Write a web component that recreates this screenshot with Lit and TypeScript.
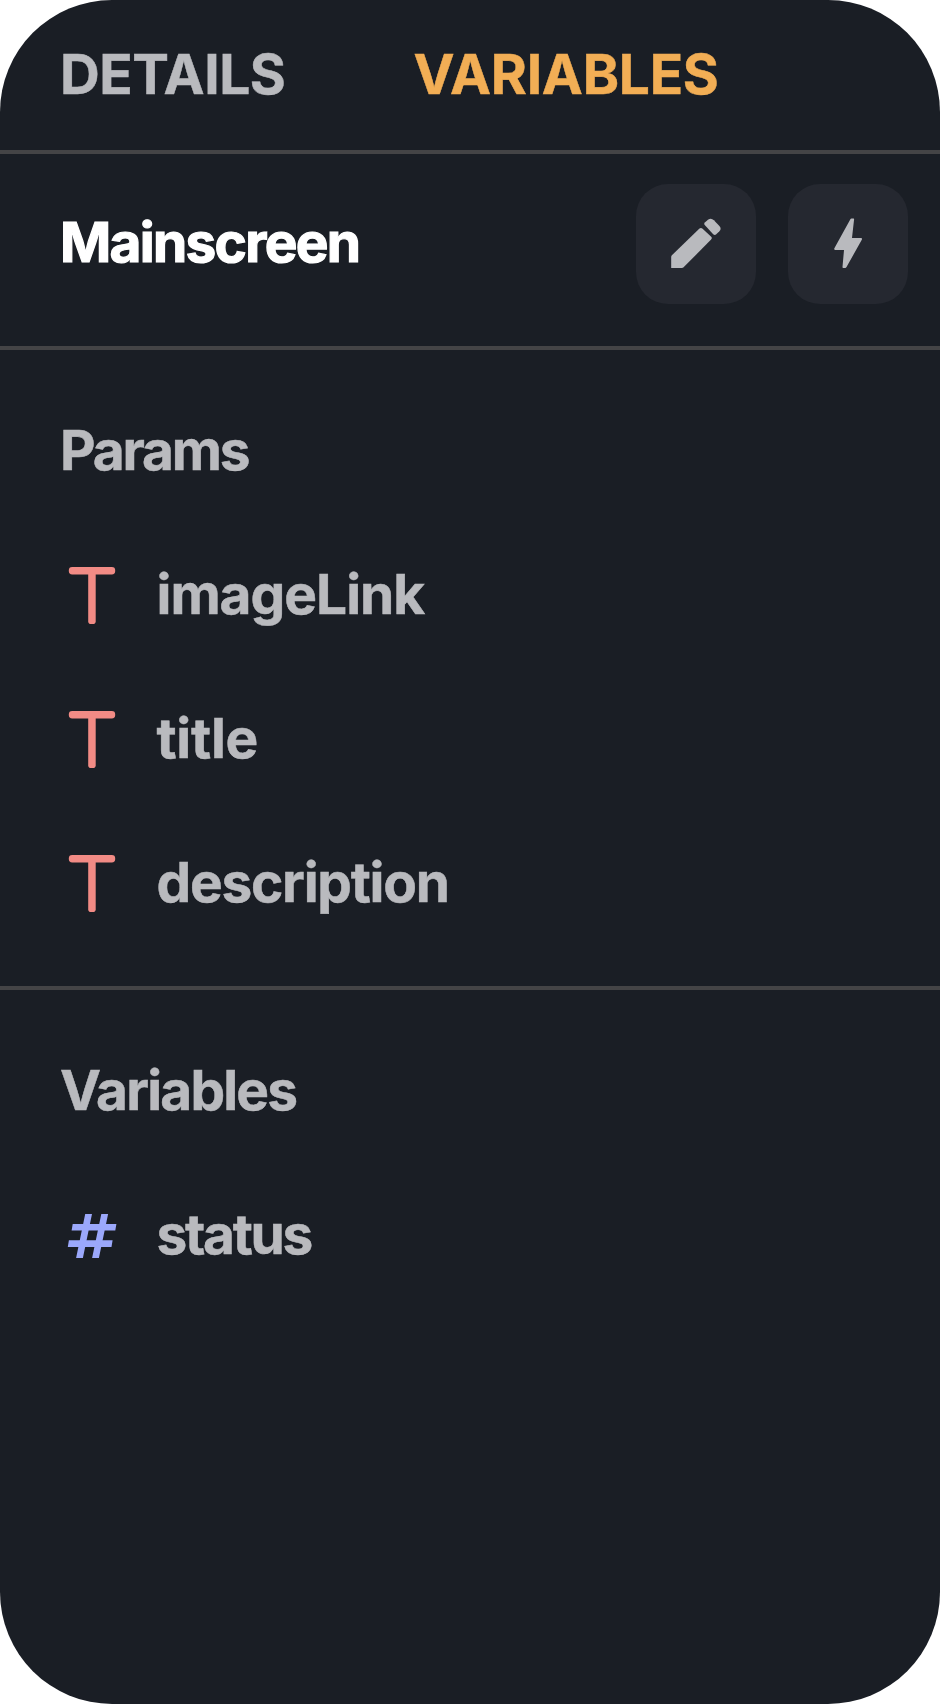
import { LitElement, html, css, svg } from "lit";
import { customElement } from "lit/decorators.js";

const textIcon = html`<svg class="kind text" viewBox="0 0 64 72">
  <rect x="8.8" y="9" width="46.4" height="7.4" rx="3.4"></rect>
  <rect x="28.2" y="11" width="7.5" height="55" rx="2.8"></rect>
</svg>`;

const numberIcon = html`<svg class="kind number" viewBox="0 0 64 72">
  ${svg`<path d="M25.2 16H32L22.9 60H16.1Z M41.3 16H48.1L38.9 60H32.1Z"></path>
  <path d="M12.7 26H56.4L55.3 32.6H11.6Z M8.9 42.2H52.6L51.5 48.9H7.8Z"></path>`}
</svg>`;

const pencilIcon = html`<svg class="glyph" viewBox="0 0 120 120">
  <path d="M35.2 84V73Q35.2 72 35.9 71.3L63.2 44.7Q65 43.2 66.6 44.7L75.2 52.8Q76.5 54.1 75.1 55.6L47.6 83.3Q46.8 84 45.8 84Z"></path>
  <path d="M68.5 40.8Q67.7 39.6 68.8 38.5L72 35.8Q75 33.4 77.9 36.3L83.4 41.9Q85.8 44.6 83.4 47.2L80 50.5Q78.7 51.6 77.2 50.2Z"></path>
</svg>`;

const boltIcon = html`<svg class="glyph" viewBox="0 0 120 120">
  <path d="M62.5 35Q62.8 34.4 63.4 34.4H65.6Q66.2 34.4 66.1 35.2L64 54H72.9Q74.6 54 73.8 55.8L58.5 83Q58 83.9 57.2 83.9H55.2Q54.4 83.9 54.5 83L56 66H47.4Q45.6 66 46.5 64Z"></path>
</svg>`;

interface Item {
  name: string;
  icon: unknown;
  cls: string;
}

@customElement("app-root")
export class AppRoot extends LitElement {
  static styles = css`
    :host {
      display: block;
      font-family: Inter, sans-serif;
      font-size: 55px;
      font-weight: 700;
      line-height: 72px;
      color: #b9babe;
      -webkit-text-stroke: 0.5px currentColor;
    }
    .panel {
      box-sizing: border-box;
      width: 940px;
      height: 1704px;
      background: #1a1e25;
      border-radius: 112px;
      overflow: hidden;
    }
    .tabs {
      box-sizing: border-box;
      height: 154px;
      display: flex;
      align-items: center;
      padding: 0 0 2px 60px;
      border-bottom: 4px solid #444446;
    }
    .tab { width: 353.5px; letter-spacing: -0.45px; white-space: nowrap; }
    .tab.active { color: #f2ae55; letter-spacing: -0.25px; }
    .screen {
      box-sizing: border-box;
      height: 196px;
      display: flex;
      align-items: flex-start;
      gap: 32px;
      padding: 30px 32px 0 60px;
      border-bottom: 4px solid #444446;
    }
    .title {
      flex: 1;
      margin-top: 22px;
      color: #fff;
      letter-spacing: -1.7px;
      -webkit-text-stroke: 1.2px #fff;
    }
    .action {
      width: 120px;
      height: 120px;
      padding: 0;
      border: 0;
      border-radius: 32px;
      background: #252830;
    }
    .glyph { display: block; width: 120px; height: 120px; fill: #b9babe; }
    .section { padding: 28px 0 32px; }
    .section + .section { border-top: 4px solid #444446; }
    .heading, .row { height: 144px; display: flex; align-items: center; }
    .heading { padding-left: 60px; }
    .row { padding-left: 60px; gap: 32.5px; }
    .kind { width: 64px; height: 72px; flex: none; }
    .text { fill: #f28b85; }
    .number { fill: #9ba8fb; }
    .params { letter-spacing: -2.2px; }
    .variables { letter-spacing: -1.8px; }
    .link { letter-spacing: -1px; }
    .short { letter-spacing: -0.3px; }
    .desc { letter-spacing: -1.25px; }
    .status { letter-spacing: -2.3px; }
  `;

  private section(title: string, cls: string, items: Item[]) {
    return html`<section class="section">
      <div class="heading ${cls}">${title}</div>
      ${items.map((i) => html`<div class="row">${i.icon}<span class=${i.cls}>${i.name}</span></div>`)}
    </section>`;
  }

  render() {
    return html`<main class="panel">
      <nav class="tabs"><span class="tab">DETAILS</span><span class="tab active">VARIABLES</span></nav>
      <header class="screen">
        <span class="title">Mainscreen</span>
        <button class="action" aria-label="Edit">${pencilIcon}</button>
        <button class="action" aria-label="Actions">${boltIcon}</button>
      </header>
      ${this.section("Params", "params", [
        { name: "imageLink", icon: textIcon, cls: "link" },
        { name: "title", icon: textIcon, cls: "short" },
        { name: "description", icon: textIcon, cls: "desc" },
      ])}
      ${this.section("Variables", "variables", [{ name: "status", icon: numberIcon, cls: "status" }])}
    </main>`;
  }
}
